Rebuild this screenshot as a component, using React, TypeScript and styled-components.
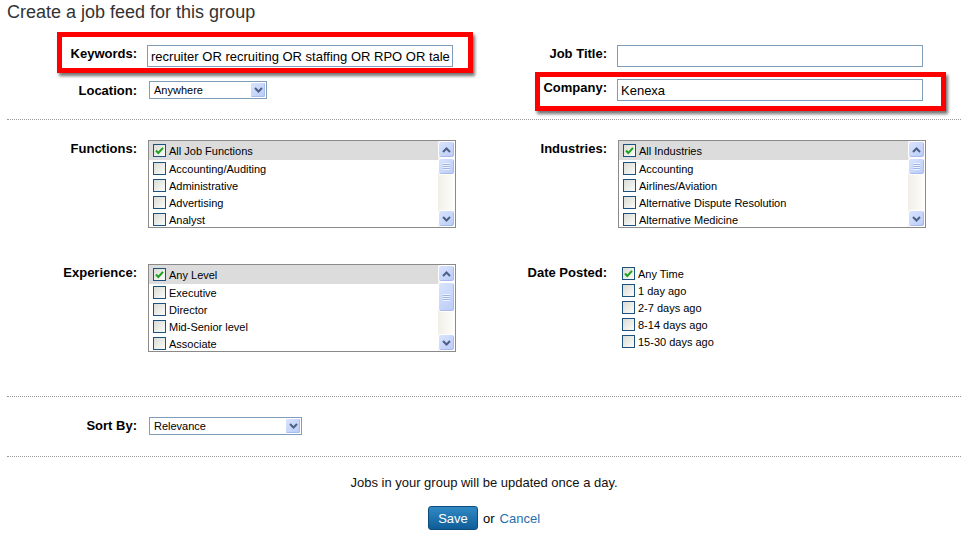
import styled, { createGlobalStyle } from "styled-components";

const GlobalStyle = createGlobalStyle`
  html, body {
    margin: 0;
    padding: 0;
    background: #fff;
  }
  body {
    font-family: Arial, "Liberation Sans", sans-serif;
    color: #000;
  }
`;

const Page = styled.div`
  width: 954px;
  padding-left: 7px;
`;

const Title = styled.h2`
  margin: 0;
  padding-top: 2px;
  font-size: 18px;
  line-height: 21px;
  font-weight: normal;
  color: #333;
`;

const Section = styled.div<{ $top: number; $bottom: number; $gap: number; $rule?: boolean }>`
  display: flex;
  flex-direction: column;
  gap: ${(p) => p.$gap}px;
  padding: ${(p) => p.$top}px 0 ${(p) => p.$bottom}px;
  border-top: ${(p) => (p.$rule ? "1px dotted #999" : "none")};
`;

const Row = styled.div`
  display: grid;
  grid-template-columns: 470px 470px;
`;

const Field = styled.div<{ $center?: boolean }>`
  position: relative;
  display: grid;
  grid-template-columns: 130px auto;
  column-gap: 10px;
  justify-content: start;
  align-items: ${(p) => (p.$center ? "center" : "start")};
`;

const Label = styled.label`
  text-align: right;
  font-weight: bold;
  font-size: 13px;
  line-height: 16px;
  padding-top: 1px;
`;

const TextInput = styled.input`
  width: 306px;
  height: 22px;
  box-sizing: border-box;
  border: 1px solid #7f9db9;
  padding: 0 2px 0 3px;
  margin: 0;
  font-family: Arial, "Liberation Sans", sans-serif;
  font-size: 13px;
  color: #000;
  outline: none;
`;

const Highlight = styled.div<{ $inset: string }>`
  position: absolute;
  inset: ${(p) => p.$inset};
  border: 5px solid #ff0000;
  box-shadow: 2px 3px 3px rgba(0, 0, 0, 0.55);
  pointer-events: none;
`;

const SelectBox = styled.div<{ $width: number }>`
  margin-left: 2px;
  width: ${(p) => p.$width}px;
  height: 18px;
  box-sizing: border-box;
  border: 1px solid #7f9db9;
  background: #fff;
  display: flex;
  align-items: center;
  justify-content: space-between;
  padding-left: 4px;
  font-size: 11px;
`;

const SelectArrow = styled.span`
  width: 16px;
  height: 16px;
  box-sizing: border-box;
  border: 1px solid #fff;
  border-radius: 2px;
  background: linear-gradient(135deg, #d9e3fd 0%, #b8caf7 100%);
  box-shadow: inset -1px -1px 0 #a9bdef;
  display: flex;
  align-items: center;
  justify-content: center;
`;

const Listbox = styled.div`
  margin-left: 1px;
  width: 308px;
  height: 88px;
  box-sizing: border-box;
  border: 1px solid #8a8a8a;
  display: flex;
  overflow: hidden;
`;

const Options = styled.div`
  flex: 1;
  display: flex;
  flex-direction: column;
  overflow: hidden;
`;

const OptionRow = styled.div<{ $selected?: boolean; $indent?: number }>`
  flex-shrink: 0;
  height: ${(p) => (p.$selected ? 19 : 17)}px;
  display: flex;
  align-items: center;
  gap: 3px;
  padding-left: ${(p) => p.$indent ?? 4}px;
  background: ${(p) => (p.$selected ? "#dcdcdc" : "transparent")};
  font-size: 11px;
  white-space: nowrap;
`;

const Scrollbar = styled.div`
  width: 17px;
  flex-shrink: 0;
  display: flex;
  flex-direction: column;
  background: linear-gradient(to right, #f1efe8, #fefefb);
`;

const ScrollButton = styled.div`
  width: 17px;
  height: 17px;
  box-sizing: border-box;
  flex-shrink: 0;
  border: 1px solid #fff;
  border-radius: 3px;
  background: linear-gradient(135deg, #dae4fe 0%, #b9cbf7 100%);
  box-shadow: inset -1px -1px 0 #a6baee;
  display: flex;
  align-items: center;
  justify-content: center;
`;

const Thumb = styled(ScrollButton)<{ $size: number }>`
  height: ${(p) => p.$size}px;
`;

const Grip = styled.span`
  width: 7px;
  height: 7px;
  background: repeating-linear-gradient(
    to bottom,
    #eef3ff 0px,
    #eef3ff 1px,
    #9fb5ea 1px,
    #9fb5ea 2px
  );
`;

const Spacer = styled.div`
  flex: 1;
`;

const Box = styled.span`
  width: 13px;
  height: 13px;
  box-sizing: border-box;
  flex-shrink: 0;
  border: 1px solid #1c5180;
  background: linear-gradient(135deg, #dcdcd6 0%, #fbfbf8 100%);
  display: inline-flex;
  align-items: center;
  justify-content: center;
`;

const DateList = styled.div`
  margin-left: 5px;
  padding-top: 1px;
  display: flex;
  flex-direction: column;
`;

const Footer = styled.div`
  display: flex;
  flex-direction: column;
  align-items: center;
  gap: 15px;
  padding-top: 18px;
`;

const Note = styled.p`
  margin: 0;
  font-size: 13px;
  line-height: 16px;
  color: #111;
`;

const Actions = styled.div`
  display: flex;
  align-items: center;
  gap: 5px;
  font-size: 13px;
`;

const SaveButton = styled.button`
  width: 50px;
  height: 24px;
  padding: 0;
  border: 1px solid #0c4c7d;
  border-radius: 3px;
  background: linear-gradient(#3189c4, #0f5d98);
  color: #fff;
  font-family: Arial, "Liberation Sans", sans-serif;
  font-size: 13px;
`;

const CancelLink = styled.a`
  color: #1f6fad;
  text-decoration: none;
`;

const Chevron = ({ down }: { down?: boolean }) => (
  <svg width="9" height="6" viewBox="0 0 9 6">
    <path
      d={down ? "M1 1 L4.5 4.5 L8 1" : "M1 5 L4.5 1.5 L8 5"}
      fill="none"
      stroke="#4d6185"
      strokeWidth="2"
    />
  </svg>
);

const Checkbox = ({ checked }: { checked?: boolean }) => (
  <Box>
    {checked && (
      <svg width="11" height="11" viewBox="0 0 11 11">
        <path d="M2 5.5 L4.3 8 L9 2.8" fill="none" stroke="#21a121" strokeWidth="2" />
      </svg>
    )}
  </Box>
);

const Select = ({ value, width }: { value: string; width: number }) => (
  <SelectBox $width={width}>
    <span>{value}</span>
    <SelectArrow>
      <Chevron down />
    </SelectArrow>
  </SelectBox>
);

const CheckList = ({ items, thumb }: { items: string[]; thumb: number }) => (
  <Listbox>
    <Options>
      {items.map((item, i) => (
        <OptionRow key={item} $selected={i === 0}>
          <Checkbox checked={i === 0} />
          {item}
        </OptionRow>
      ))}
    </Options>
    <Scrollbar>
      <ScrollButton>
        <Chevron />
      </ScrollButton>
      <Thumb $size={thumb}>
        <Grip />
      </Thumb>
      <Spacer />
      <ScrollButton>
        <Chevron down />
      </ScrollButton>
    </Scrollbar>
  </Listbox>
);

const functions = ["All Job Functions", "Accounting/Auditing", "Administrative", "Advertising", "Analyst"];
const industries = [
  "All Industries",
  "Accounting",
  "Airlines/Aviation",
  "Alternative Dispute Resolution",
  "Alternative Medicine",
];
const levels = ["Any Level", "Executive", "Director", "Mid-Senior level", "Associate"];
const dates = ["Any Time", "1 day ago", "2-7 days ago", "8-14 days ago", "15-30 days ago"];

export default function App() {
  return (
    <>
      <GlobalStyle />
      <Page>
        <Title>Create a job feed for this group</Title>

        <Section $top={22} $bottom={18} $gap={12}>
          <Row>
            <Field>
              <Label>Keywords:</Label>
              <TextInput
                readOnly
                defaultValue="recruiter OR recruiting OR staffing OR RPO OR talent acquisition"
              />
              <Highlight $inset="-13px 4px -6px 50px" />
            </Field>
            <Field>
              <Label>Job Title:</Label>
              <TextInput readOnly defaultValue="" />
            </Field>
          </Row>
          <Row>
            <Field $center>
              <Label>Location:</Label>
              <Select value="Anywhere" width={118} />
            </Field>
            <Field>
              <Label>Company:</Label>
              <TextInput readOnly defaultValue="Kenexa" />
              <Highlight $inset="-7px 1px -10px 58px" />
            </Field>
          </Row>
        </Section>

        <Section $rule $top={20} $bottom={44} $gap={36}>
          <Row>
            <Field>
              <Label>Functions:</Label>
              <CheckList items={functions} thumb={17} />
            </Field>
            <Field>
              <Label>Industries:</Label>
              <CheckList items={industries} thumb={17} />
            </Field>
          </Row>
          <Row>
            <Field>
              <Label>Experience:</Label>
              <CheckList items={levels} thumb={30} />
            </Field>
            <Field>
              <Label>Date Posted:</Label>
              <DateList>
                {dates.map((d, i) => (
                  <OptionRow key={d} $indent={0}>
                    <Checkbox checked={i === 0} />
                    {d}
                  </OptionRow>
                ))}
              </DateList>
            </Field>
          </Row>
        </Section>

        <Section $rule $top={20} $bottom={21} $gap={0}>
          <Row>
            <Field>
              <Label>Sort By:</Label>
              <Select value="Relevance" width={153} />
            </Field>
          </Row>
        </Section>

        <Section $rule $top={0} $bottom={0} $gap={0}>
          <Footer>
            <Note>Jobs in your group will be updated once a day.</Note>
            <Actions>
              <SaveButton>Save</SaveButton>
              <span>or</span>
              <CancelLink href="#">Cancel</CancelLink>
            </Actions>
          </Footer>
        </Section>
      </Page>
    </>
  );
}
